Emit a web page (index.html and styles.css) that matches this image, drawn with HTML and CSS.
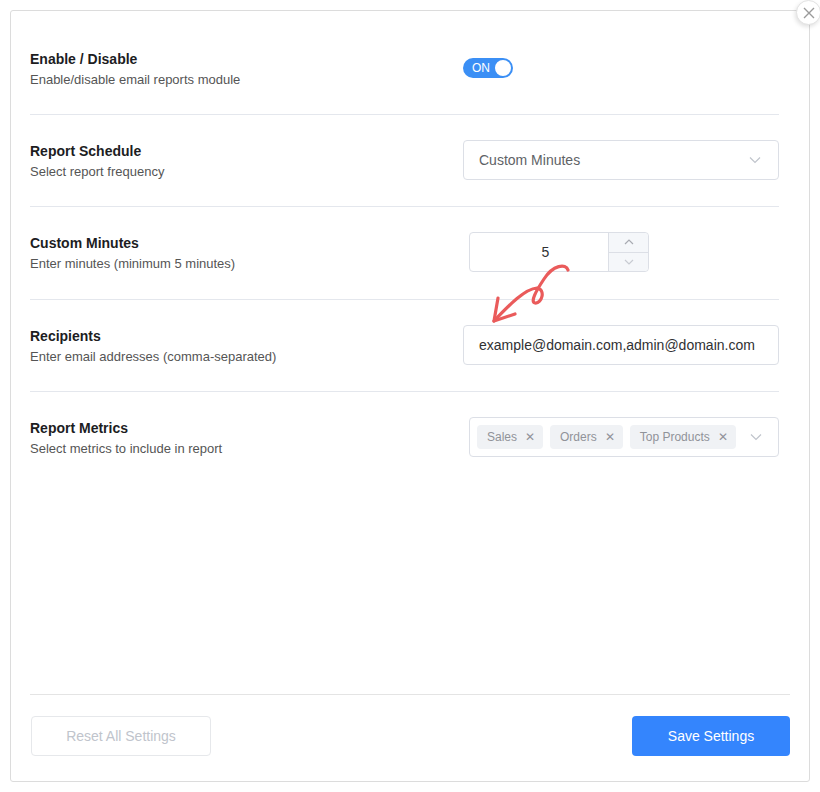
FILE: index.html
```html
<!DOCTYPE html>
<html>
<head>
  <meta charset="utf-8">
  <title>Email Reports Settings</title>
  <link rel="stylesheet" href="styles.css">
</head>
<body>
  <div class="dialog">
    <a class="close">
      <svg width="12" height="12" viewBox="0 0 12 12"><path d="M1 1L11 11M11 1L1 11" stroke="#9a9a9a" stroke-width="1.4" fill="none"/></svg>
    </a>

    <div class="rows">
      <div class="row">
        <div class="label">
          <div class="title">Enable / Disable</div>
          <div class="desc">Enable/disable email reports module</div>
        </div>
        <div class="control">
          <span class="switch"><span class="switch-text">ON</span><span class="knob"></span></span>
        </div>
      </div>

      <div class="row">
        <div class="label">
          <div class="title">Report Schedule</div>
          <div class="desc">Select report frequency</div>
        </div>
        <div class="control">
          <div class="select">
            <span>Custom Minutes</span>
            <svg class="chevron" width="12" height="8" viewBox="0 0 12 8"><path d="M1 1.5L6 6.5L11 1.5" stroke="#c0c4cc" stroke-width="1.2" fill="none"/></svg>
          </div>
        </div>
      </div>

      <div class="row tall">
        <div class="label">
          <div class="title">Custom Minutes</div>
          <div class="desc">Enter minutes (minimum 5 minutes)</div>
        </div>
        <div class="control">
          <div class="number">
            <span class="number-value">5</span>
            <div class="number-btns">
              <span class="up"><svg width="10" height="6" viewBox="0 0 10 6"><path d="M1 5L5 1L9 5" stroke="#a8abb2" stroke-width="1.2" fill="none"/></svg></span>
              <span class="down"><svg width="10" height="6" viewBox="0 0 10 6"><path d="M1 1L5 5L9 1" stroke="#c8cbd2" stroke-width="1.2" fill="none"/></svg></span>
            </div>
          </div>
        </div>
      </div>

      <div class="row">
        <div class="label">
          <div class="title">Recipients</div>
          <div class="desc">Enter email addresses (comma-separated)</div>
        </div>
        <div class="control">
          <div class="input">example@domain.com,admin@domain.com</div>
        </div>
      </div>

      <div class="row last">
        <div class="label">
          <div class="title">Report Metrics</div>
          <div class="desc">Select metrics to include in report</div>
        </div>
        <div class="control">
          <div class="multi">
            <span class="tag">Sales <i>&#x2715;</i></span>
            <span class="tag">Orders <i>&#x2715;</i></span>
            <span class="tag">Top Products <i>&#x2715;</i></span>
            <svg class="chevron" width="12" height="8" viewBox="0 0 12 8"><path d="M1 1.5L6 6.5L11 1.5" stroke="#c0c4cc" stroke-width="1.2" fill="none"/></svg>
          </div>
        </div>
      </div>
    </div>

    <div class="footer">
      <button class="btn reset">Reset All Settings</button>
      <button class="btn save">Save Settings</button>
    </div>

    <!-- hand drawn hint arrow -->
    <svg class="arrow" width="820" height="792" viewBox="0 0 820 792">
      <path d="M568 270 C 566 263, 553 265, 544 279 C 536 291, 530 302, 535 303 C 542 304, 546 289, 537 288 C 525 289, 510 304, 494 321" stroke="#ea5b5b" stroke-width="3.2" fill="none" stroke-linecap="round"/>
      <path d="M498 298 L 494 321 L 515 314" stroke="#ea5b5b" stroke-width="3.2" fill="none" stroke-linecap="round" stroke-linejoin="round"/>
    </svg>
  </div>
</body>
</html>
```

FILE: styles.css
```css
* {
  box-sizing: border-box;
}
body {
  margin: 0;
  background: #fff;
  font-family: "Liberation Sans", Arial, sans-serif;
}
.dialog {
  position: relative;
  margin: 10px 0 0 10px;
  width: 800px;
  height: 772px;
  border: 1px solid #dcdcdc;
  border-radius: 3px;
  padding: 12px 19px 25px 19px;
  display: flex;
  flex-direction: column;
}
.close {
  position: absolute;
  top: -11px;
  right: -12px;
  width: 25px;
  height: 25px;
  border-radius: 50%;
  background: #fff;
  border: 1px solid #e2e2e2;
  box-shadow: -1px 2px 4px rgba(0, 0, 0, .12);
  display: flex;
  align-items: center;
  justify-content: center;
}
.rows {
  width: 749px;
}
.row {
  display: flex;
  align-items: center;
  padding: 24px 0;
  border-bottom: 1px solid #e4e7ed;
}
.row.tall {
  padding-bottom: 25px;
}
.row.last {
  border-bottom: none;
}
.label {
  flex-shrink: 0;
  width: 433px;
  padding-top: 2px;
}
.title {
  font-size: 14px;
  font-weight: bold;
  line-height: 20px;
  color: #1d1d1f;
}
.desc {
  font-size: 13px;
  line-height: 20px;
  margin-top: 1px;
  color: #555;
}
.control {
  flex: 1;
  min-width: 0;
  margin-top: -1px;
}
.switch {
  display: flex;
  align-items: center;
  width: 50px;
  height: 20px;
  border-radius: 10px;
  background: #3b8ff5;
  padding: 0 2px 0 9px;
}
.switch-text {
  flex: 1;
  color: #fff;
  font-size: 12px;
}
.knob {
  width: 16px;
  height: 16px;
  border-radius: 50%;
  background: #fff;
}
.select, .input {
  height: 40px;
  border: 1px solid #dcdfe6;
  border-radius: 4px;
  display: flex;
  align-items: center;
  padding: 0 15px;
  font-size: 14px;
}
.select {
  color: #606266;
  justify-content: space-between;
}
.select .chevron {
  margin-right: 2px;
}
.input {
  color: #303133;
}
.number {
  margin-left: 6px;
  width: 180px;
  height: 40px;
  border: 1px solid #dcdfe6;
  border-radius: 4px;
  display: flex;
}
.number-value {
  flex: 1;
  display: flex;
  align-items: center;
  justify-content: center;
  padding-left: 13px;
  font-size: 14px;
  color: #303133;
}
.number-btns {
  width: 40px;
  display: flex;
  flex-direction: column;
  border-left: 1px solid #dcdfe6;
  background: #f5f7fa;
  border-radius: 0 4px 4px 0;
}
.number-btns span {
  flex: 1;
  display: flex;
  align-items: center;
  justify-content: center;
}
.number-btns .up {
  border-bottom: 1px solid #dcdfe6;
}
.multi {
  margin-left: 6px;
  height: 40px;
  border: 1px solid #dcdfe6;
  border-radius: 4px;
  display: flex;
  align-items: center;
  gap: 7px;
  padding: 0 16px 0 7px;
}
.tag {
  flex-shrink: 0;
  white-space: nowrap;
  height: 24px;
  display: flex;
  align-items: center;
  gap: 8px;
  padding: 0 8px 0 10px;
  background: #f0f2f5;
  border-radius: 4px;
  color: #909399;
  font-size: 12px;
}
.tag i {
  font-style: normal;
  font-size: 12px;
}
.multi .chevron {
  margin-left: auto;
}
.footer {
  margin-top: auto;
  border-top: 1px solid #e4e4e4;
  padding-top: 21px;
  display: flex;
  justify-content: space-between;
}
.btn {
  height: 40px;
  border-radius: 4px;
  font-family: "Liberation Sans", Arial, sans-serif;
  font-size: 14px;
}
.reset {
  margin-left: 1px;
  width: 180px;
  background: #fff;
  border: 1px solid #e6e8eb;
  color: #c0c4cc;
}
.save {
  width: 158px;
  background: #3485fd;
  border: none;
  color: #fff;
}
.arrow {
  position: absolute;
  left: -11px;
  top: -11px;
  pointer-events: none;
}
```
